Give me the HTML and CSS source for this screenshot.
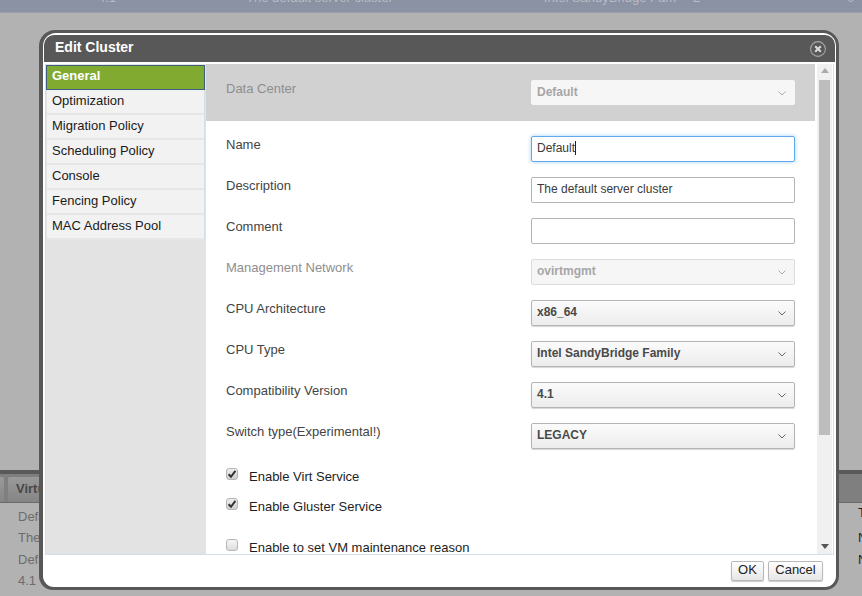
FILE: index.html
```html
<!DOCTYPE html>
<html lang="en">
<head>
<meta charset="utf-8">
<title>Edit Cluster</title>
<link rel="stylesheet" href="styles.css">
</head>
<body>
<div class="page">
  <div class="topband">
    <span class="tb-a">4.1</span><span class="tb-b">The default server cluster</span><span class="tb-c">Intel SandyBridge Fam</span><span class="tb-d">2</span><span class="tb-e">0</span>
  </div>
  <div class="spacer"></div>
  <div class="subpanel">
    <div class="subtabs"><span class="subtab subtab-first"></span><span class="subtab">Virtual Machines</span></div>
    <div class="subinfo">
      <div class="subcol"><div>Default</div><div>The default server cluster</div><div>Default</div><div>4.1</div></div>
      <div class="subcol subcol-right"><div>T</div><div>N</div><div>N</div></div>
    </div>
  </div>

  <div class="dialog">
    <div class="dlg-inner">
      <div class="dlg-head">
        <span class="dlg-title">Edit Cluster</span>
        <svg class="dlg-close" width="16" height="16" viewBox="0 0 16 16"><circle cx="8" cy="8" r="7.4" fill="none" stroke="#a8a8a8" stroke-width="1.1"/><path d="M5.2 5.2l5.6 5.6M10.8 5.2l-5.6 5.6" stroke="#dcdcdc" stroke-width="2"/></svg>
      </div>
      <div class="dlg-body">
        <nav class="side">
          <div class="side-item side-active">General</div>
          <div class="side-item">Optimization</div>
          <div class="side-item">Migration Policy</div>
          <div class="side-item">Scheduling Policy</div>
          <div class="side-item">Console</div>
          <div class="side-item">Fencing Policy</div>
          <div class="side-item">MAC Address Pool</div>
        </nav>
        <div class="form">
          <div class="band">
            <div class="row">
              <label class="lbl lbl-off">Data Center</label>
              <div class="sel sel-off sel-band">Default<svg class="chev" width="8" height="5" viewBox="0 0 8 5"><path d="M.5.5L4 4 7.500.5" fill="none" stroke="#aaa" stroke-width="1"/></svg></div>
            </div>
          </div>
          <div class="fields">
            <div class="row"><label class="lbl">Name</label><div class="inp inp-focus">Default<span class="caret"></span></div></div>
            <div class="row"><label class="lbl">Description</label><div class="inp">The default server cluster</div></div>
            <div class="row"><label class="lbl">Comment</label><div class="inp"></div></div>
            <div class="row"><label class="lbl lbl-off">Management Network</label><div class="sel sel-off">ovirtmgmt<svg class="chev" width="8" height="5" viewBox="0 0 8 5"><path d="M.5.5L4 4 7.500.5" fill="none" stroke="#aaa" stroke-width="1"/></svg></div></div>
            <div class="row"><label class="lbl">CPU Architecture</label><div class="sel">x86_64<svg class="chev" width="8" height="5" viewBox="0 0 8 5"><path d="M.5.5L4 4 7.500.5" fill="none" stroke="#666" stroke-width="1"/></svg></div></div>
            <div class="row"><label class="lbl">CPU Type</label><div class="sel">Intel SandyBridge Family<svg class="chev" width="8" height="5" viewBox="0 0 8 5"><path d="M.5.5L4 4 7.500.5" fill="none" stroke="#666" stroke-width="1"/></svg></div></div>
            <div class="row"><label class="lbl">Compatibility Version</label><div class="sel">4.1<svg class="chev" width="8" height="5" viewBox="0 0 8 5"><path d="M.5.5L4 4 7.500.5" fill="none" stroke="#666" stroke-width="1"/></svg></div></div>
            <div class="row"><label class="lbl">Switch type(Experimental!)</label><div class="sel">LEGACY<svg class="chev" width="8" height="5" viewBox="0 0 8 5"><path d="M.5.5L4 4 7.500.5" fill="none" stroke="#666" stroke-width="1"/></svg></div></div>
            <div class="check check-first"><span class="box"><svg width="12" height="12" viewBox="0 0 12 12"><path d="M2.6 6.2l2.4 2.6 4.4-6" fill="none" stroke="#333" stroke-width="2"/></svg></span>Enable Virt Service</div>
            <div class="check check-second"><span class="box"><svg width="12" height="12" viewBox="0 0 12 12"><path d="M2.6 6.2l2.4 2.6 4.4-6" fill="none" stroke="#333" stroke-width="2"/></svg></span>Enable Gluster Service</div>
            <div class="check check-third"><span class="box"></span>Enable to set VM maintenance reason</div>
          </div>
        </div>
        <div class="scroll">
          <svg class="arrow" width="8" height="5" viewBox="0 0 8 5"><path d="M0 5l4-5 4 5z" fill="#aaa"/></svg>
          <div class="thumb"></div>
          <div class="track"></div>
          <svg class="arrow" width="8" height="5" viewBox="0 0 8 5"><path d="M0 0l4 5 4-5z" fill="#555"/></svg>
        </div>
      </div>
      <div class="dlg-foot">
        <button class="btn btn-ok">OK</button><button class="btn btn-cancel">Cancel</button>
      </div>
    </div>
  </div>
</div>
</body>
</html>
```
FILE: styles.css
```css
* { box-sizing: border-box; }
html, body { margin: 0; padding: 0; }
body { font-family: "Liberation Sans", Arial, sans-serif; font-size: 13px; }
.page { position: relative; width: 862px; height: 596px; overflow: hidden; display: flex; flex-direction: column; background: #b2b2b2; }

.topband { height: 13px; background: #8a92a3; border-bottom: 1px solid #9a9fa9; color: #b8bcc5; position: relative; overflow: hidden; font-size: 13px; line-height: 12px; display: flex; flex: none; }
.topband span { display: block; margin-top: -8px; white-space: nowrap; }
.tb-a { margin-left: 98px; }
.tb-b { margin-left: 130px; }
.tb-c { margin-left: 151px; }
.tb-d { margin-left: 17px; }
.tb-e { margin-left: 147px; }

.spacer { flex: 1; }

.subpanel { height: 126px; flex: none; background: #b2b2b2; border-top: 4px solid #595959; }
.subtabs { height: 29px; background: #7f7f7f; border-bottom: 1px solid #6a6a6a; display: flex; gap: 4px; padding-top: 3px; }
.subtab { display: block; height: 25px; padding: 4px 8px 0 8px; font-weight: bold; font-size: 13px; color: #484848; background: linear-gradient(#9a9a9a, #858585); border-radius: 2px 2px 0 0; white-space: nowrap; }
.subtab-first { width: 4px; padding: 0; border-radius: 0 2px 0 0; }
.subinfo { display: flex; justify-content: space-between; padding-left: 18px; color: #6c6c6c; line-height: 21.3px; padding-top: 3px; }
.subcol-right { width: 4px; color: #222; overflow: hidden; margin-top: -4px; }
.subcol-right div:first-child { margin-bottom: 4px; }

.dialog { position: absolute; left: 39px; top: 30px; width: 800px; height: 560px; background: #585858; border-radius: 16px 16px 14px 14px; padding: 3px 3px 3px 4px; }
.dlg-inner { background: #fff; height: 100%; border-radius: 13px 13px 11px 11px; display: flex; flex-direction: column; padding: 2px 1px 0; overflow: hidden; }
.dlg-head { height: 27px; flex: none; background: #585858; display: flex; align-items: center; justify-content: space-between; padding: 0 9px 0 11px; border-radius: 10px 10px 0 0; margin-bottom: 2px; }
.dlg-title { color: #fff; font-weight: bold; font-size: 14px; margin-top: -3px; }
.dlg-close { display: block; }

.dlg-body { height: 491px; flex: none; margin: 0 1px; display: flex; background: #fff; border: 1px solid #d3dde5; border-top: 0; }
.side { width: 160px; flex: none; background: #e3e3e3; }
.side-item { height: 25px; background: #f2f2f2; border-bottom: 2px solid #e6e6e6; border-right: 1px solid #d3dde5; padding: 3px 0 0 5px; color: #1a1a1a; line-height: 16px; margin: 0 1px 0 1px; }
.side-active { background: #80aa30; color: #fff; font-weight: bold; border: 1px solid #3a5f80; margin: 1px 1px 0 0; padding: 2px 0 0 5px; }

.form { width: 609px; flex: none; overflow: hidden; color: #444; }
.band { height: 57px; background: #d1d1d1; padding: 16px 0 0 20px; }
.fields { padding: 15px 0 0 20px; }
.row { display: flex; height: 41px; }
.lbl { width: 305px; flex: none; padding-top: 1px; line-height: 15px; }
.lbl-off { color: #8e8e8e; }
.band .row { height: 26px; }

.inp, .sel { width: 264px; height: 26px; font-size: 12px; line-height: 22px; padding-left: 5px; color: #3a3a3a; position: relative; flex: none; }
.inp { border: 1px solid #b4b4b4; border-radius: 2px; background: #fff; }
.inp-focus { border-color: #5fa9ec; box-shadow: 0 0 4px #a6d2f6; }
.caret { display: inline-block; width: 1px; height: 14px; background: #222; vertical-align: -3px; }
.sel { border: 1px solid #b4b4b4; border-radius: 2px; background: linear-gradient(#fbfbfb, #ececec); font-weight: bold; color: #4a4a4a; box-shadow: 0 1px 1px #d6d6d6; }
.sel-off { background: #f6f6f6; border-color: #dcdcdc; color: #a6a6a6; box-shadow: none; }
.sel-band { border-color: #f6f6f6; height: 25px; }
.chev { position: absolute; right: 8px; top: 10px; }

.check { display: flex; align-items: flex-start; color: #1e1e1e; line-height: 15px; white-space: nowrap; }
.box { display: flex; width: 12px; height: 12px; margin-right: 11px; border: 1px solid #b5b5b5; border-radius: 3px; background: linear-gradient(#eee, #cfcfcf); margin-top: -1px; overflow: hidden; align-items: center; justify-content: center; flex: none; }
.box svg { display: block; flex: none; }
.check-first { margin-top: 4px; height: 30px; }
.check-second { height: 41px; }
.check-third { height: 16px; }
.check-third .box { background: linear-gradient(#f6f6f6, #dcdcdc); }
.check-first, .check-second, .check-third { padding-top: 1px; }

.scroll { width: 15px; flex: none; margin-left: 2px; background: #f0f0f0; display: flex; flex-direction: column; align-items: center; padding-top: 4px; }
.arrow { display: block; flex: none; }
.thumb { width: 11px; height: 355px; background: #bdbdbd; margin-top: 7px; flex: none; }
.track { flex: 1; }
.scroll .arrow:last-child { margin-bottom: 5px; }

.dlg-foot { flex: 1; display: flex; justify-content: flex-end; align-items: flex-start; gap: 4px; padding: 6px 12px 0 0; }
.btn { height: 20px; margin: 0; padding: 0 0 3px; border: 1px solid #b9b9b9; border-radius: 2px; background: linear-gradient(#fff, #e6e6e6); font-family: "Liberation Sans", Arial, sans-serif; font-size: 13px; line-height: 14px; color: #222; box-shadow: 0 1px 1px #c9c9c9; }
.btn-ok { width: 33px; }
.btn-cancel { width: 55px; }
```
